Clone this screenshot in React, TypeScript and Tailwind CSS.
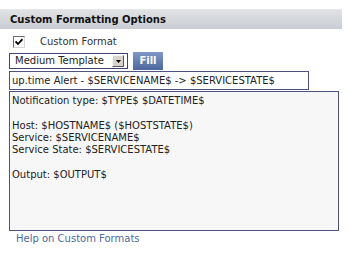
const MESSAGE_BODY = [
  "Notification type: $TYPE$ $DATETIME$",
  "",
  "Host: $HOSTNAME$ ($HOSTSTATE$)",
  "Service: $SERVICENAME$",
  "Service State: $SERVICESTATE$",
  "",
  "Output: $OUTPUT$",
].join("\n");

const FONT = "font-['DejaVu_Sans',Verdana,sans-serif]";

function CheckBox() {
  return (
    <span className="flex h-[12px] w-[12px] items-center justify-center border border-t-[#6b6b6b] border-l-[#6b6b6b] border-r-[#d8d8d8] border-b-[#d8d8d8] bg-white">
      <svg width="8" height="8" viewBox="0 0 8 8" className="block">
        <path d="M0.5 3.5 L3 6 L7.5 1.2" fill="none" stroke="#000" strokeWidth="1.8" />
      </svg>
    </span>
  );
}

export default function App() {
  return (
    <div className={`min-h-[253px] w-[348px] bg-white pt-[9px] text-[10px] leading-[12px] ${FONT}`}>
      {/* section header */}
      <div className="flex h-[20px] w-[342px] items-center border-t border-[#e6e7e9] bg-gradient-to-b from-[#e1e2e4] to-[#c9cdd3] pl-[10px]">
        <span className="text-[10px] leading-none font-bold text-[#111]">Custom Formatting Options</span>
      </div>

      {/* custom format toggle */}
      <div className="mt-[7px] flex items-center pl-[13px]">
        <CheckBox />
        <span className="ml-[15px] text-[10px] leading-none text-[#333]">Custom Format</span>
      </div>

      {/* template select + fill */}
      <div className="mt-[4px] flex items-center pl-[9px]">
        <div className="flex h-[16px] w-[119px] items-center justify-between border border-[#3f4270] bg-white pl-[5px] pr-[3px]">
          <span className="text-[10px] leading-none text-[#222]">Medium Template</span>
          <span className="flex h-[12px] w-[12px] items-center justify-center border border-t-[#f4f4f4] border-l-[#f4f4f4] border-r-[#555] border-b-[#555] bg-[#d6d3cc]">
            <svg width="5" height="3" viewBox="0 0 5 3" className="block">
              <path d="M0 0 H5 L2.5 3 Z" fill="#000" />
            </svg>
          </span>
        </div>
        <button
          type="button"
          className="ml-[5px] flex h-[18px] w-[30px] items-center justify-center bg-gradient-to-b from-[#8199c6] to-[#4c679c] text-[10px] leading-none font-bold text-white"
        >
          Fill
        </button>
      </div>

      {/* subject line */}
      <div className="mt-[1px] pl-[9px]">
        <div className="flex h-[19px] w-[300px] items-center border border-[#4f5380] bg-white pl-[2px]">
          <span className="text-[10px] leading-none whitespace-pre text-[#222]">
            up.time Alert - $SERVICENAME$ -&gt; $SERVICESTATE$
          </span>
        </div>
      </div>

      {/* message body */}
      <div className="mt-[1px] pl-[9px]">
        <textarea
          readOnly
          value={MESSAGE_BODY}
          className={`block h-[140px] w-[330px] resize-none border border-[#4f5380] bg-[#f7f7f7] px-[2px] pt-[3px] text-[10px] leading-[12.3px] text-[#222] outline-none ${FONT}`}
        />
      </div>

      {/* help link */}
      <div className="mt-[2px] pl-[16px]">
        <a className="text-[10px] leading-[12px] text-[#4d6a9c]">Help on Custom Formats</a>
      </div>
    </div>
  );
}
